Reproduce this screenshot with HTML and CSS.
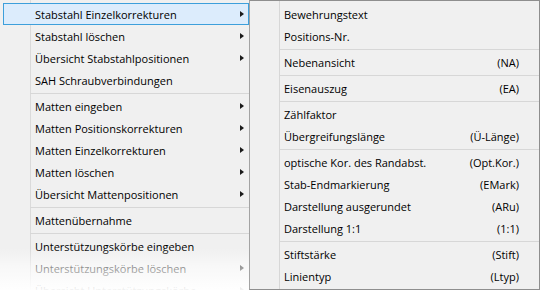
FILE: index.html
```html
<!DOCTYPE html>
<html lang="de">
<head>
<meta charset="utf-8">
<title>Menü</title>
<link rel="stylesheet" href="styles.css">
</head>
<body>
<div class="screen">
  <div class="menu main">
    <div class="item hot"><span class="label">Stabstahl Einzelkorrekturen</span><span class="arrow"></span></div>
    <div class="item"><span class="label">Stabstahl löschen</span><span class="arrow"></span></div>
    <div class="item"><span class="label">Übersicht Stabstahlpositionen</span><span class="arrow"></span></div>
    <div class="item"><span class="label">SAH Schraubverbindungen</span></div>
    <div class="sep"></div>
    <div class="item"><span class="label">Matten eingeben</span><span class="arrow"></span></div>
    <div class="item"><span class="label">Matten Positionskorrekturen</span><span class="arrow"></span></div>
    <div class="item"><span class="label">Matten Einzelkorrekturen</span><span class="arrow"></span></div>
    <div class="item"><span class="label">Matten löschen</span><span class="arrow"></span></div>
    <div class="item"><span class="label">Übersicht Mattenpositionen</span><span class="arrow"></span></div>
    <div class="sep"></div>
    <div class="item"><span class="label">Mattenübernahme</span></div>
    <div class="sep"></div>
    <div class="item"><span class="label">Unterstützungskörbe eingeben</span></div>
    <div class="item"><span class="label">Unterstützungskörbe löschen</span><span class="arrow"></span></div>
    <div class="item"><span class="label">Übersicht Unterstützungskörbe</span><span class="arrow"></span></div>
    <div class="fade"></div>
  </div>
  <div class="menu sub">
    <div class="item"><span class="label">Bewehrungstext</span></div>
    <div class="item"><span class="label">Positions-Nr.</span></div>
    <div class="sep"></div>
    <div class="item"><span class="label">Nebenansicht</span><span class="key">(NA)</span></div>
    <div class="sep"></div>
    <div class="item"><span class="label">Eisenauszug</span><span class="key">(EA)</span></div>
    <div class="sep"></div>
    <div class="item"><span class="label">Zählfaktor</span></div>
    <div class="item"><span class="label">Übergreifungslänge</span><span class="key">(Ü-Länge)</span></div>
    <div class="sep"></div>
    <div class="item"><span class="label">optische Kor. des Randabst.</span><span class="key">(Opt.Kor.)</span></div>
    <div class="item"><span class="label">Stab-Endmarkierung</span><span class="key">(EMark)</span></div>
    <div class="item"><span class="label">Darstellung ausgerundet</span><span class="key">(ARu)</span></div>
    <div class="item"><span class="label">Darstellung 1:1</span><span class="key">(1:1)</span></div>
    <div class="sep"></div>
    <div class="item"><span class="label">Stiftstärke</span><span class="key">(Stift)</span></div>
    <div class="item"><span class="label">Linientyp</span><span class="key">(Ltyp)</span></div>
  </div>
</div>
</body>
</html>
```
FILE: styles.css
```css
html, body {
  margin: 0;
  padding: 0;
  background: #ffffff;
}

body {
  font-family: "Open Sans", "Noto Sans", "Liberation Sans", sans-serif;
  font-size: 11px;
  color: #000000;
}

.screen {
  display: flex;
  width: 540px;
  height: 290px;
  overflow: hidden;
}

.menu {
  box-sizing: border-box;
  background-color: #f0f0f0;
}

.main {
  position: relative;
  width: 249px;
  flex: none;
  padding: 3px 0 0 3px;
  background-image: linear-gradient(to right, transparent 30px, #dadada 30px, #dadada 31px, transparent 31px);
}

.sub {
  width: 291px;
  height: 290px;
  flex: none;
  border: 1px solid #8e8e8e;
  border-left-color: #a3a3a3;
  padding: 2px 0;
  background-image: linear-gradient(to right, transparent 29px, #d7d7d7 29px, #d7d7d7 30px, transparent 30px);
}

.item {
  box-sizing: border-box;
  height: 22px;
  display: flex;
  align-items: center;
  border: 1px solid transparent;
  white-space: nowrap;
}

.main .item {
  padding-left: 31px;
}

.sub .item {
  padding-left: 33px;
  padding-right: 19px;
  justify-content: space-between;
}

.item.hot {
  background-color: #dcecfc;
  border-color: #3d9fdb;
}

.label {
  flex: 1;
}

.key {
  flex: none;
}

.arrow {
  flex: none;
  width: 0;
  height: 0;
  margin-right: 4px;
  border-left: 4px solid #1a1a1a;
  border-top: 3.5px solid transparent;
  border-bottom: 3.5px solid transparent;
}

.sep {
  height: 1px;
  margin: 2px 0 1px;
  background-color: #d7d7d7;
}

.main .sep {
  margin-left: 27px;
}

.sub .sep {
  margin-left: 29px;
}

.fade {
  position: absolute;
  left: 0;
  right: 0;
  bottom: 0;
  height: 42px;
  background: linear-gradient(to bottom, rgba(255, 255, 255, 0), rgba(255, 255, 255, 0.55) 45%, rgba(255, 255, 255, 0.95));
}
```
